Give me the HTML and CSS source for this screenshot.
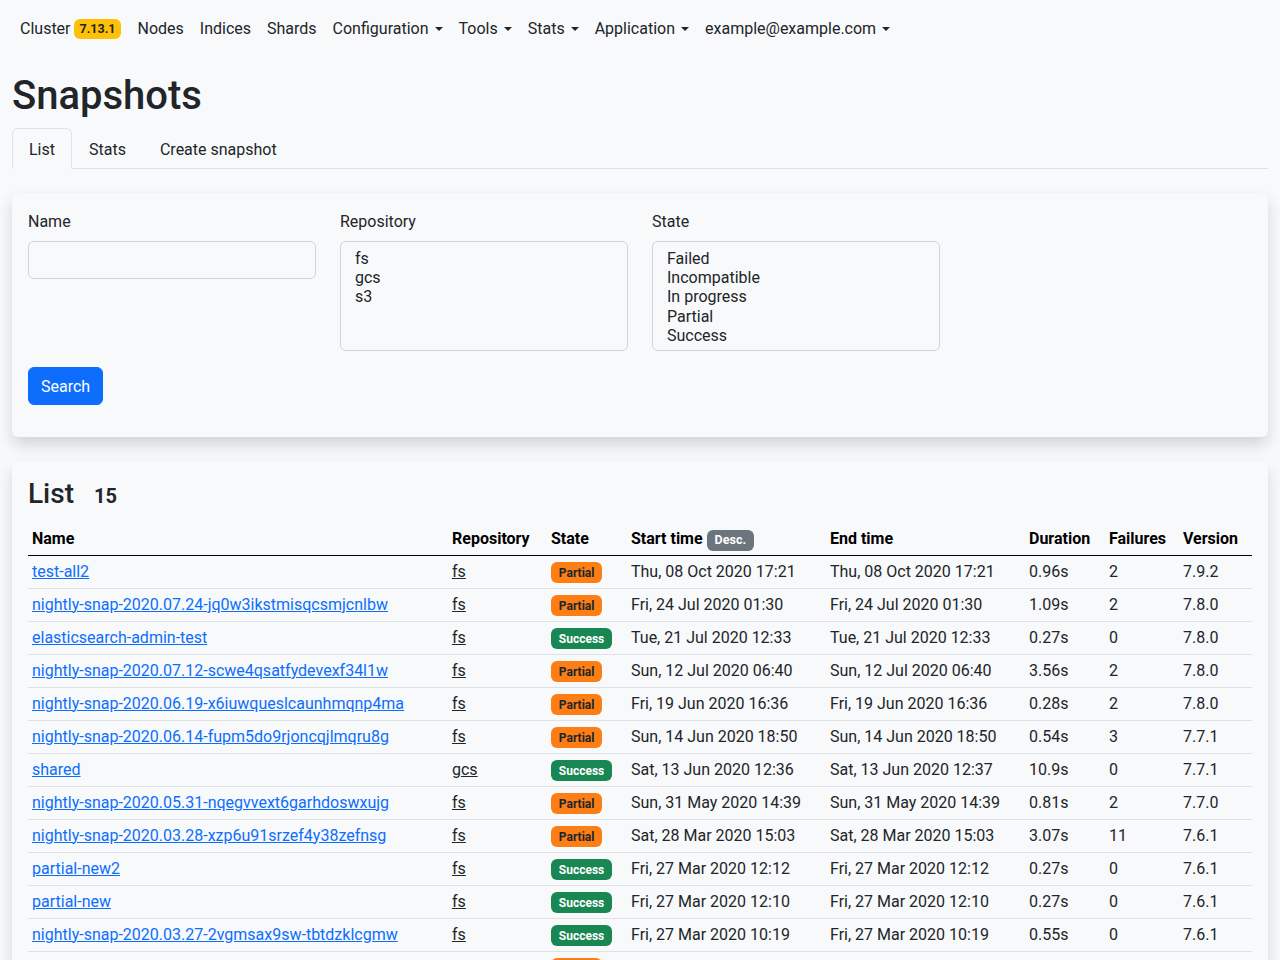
FILE: index.html
```html
<!DOCTYPE html>
<html lang="en">
<head>
<meta charset="utf-8">
<title>Snapshots</title>
<link rel="stylesheet" href="styles.css">
</head>
<body>
<nav class="navbar">
  <a class="nav-link" href="#">Cluster <span class="badge badge-warning">7.13.1</span></a>
  <a class="nav-link" href="#">Nodes</a>
  <a class="nav-link" href="#">Indices</a>
  <a class="nav-link" href="#">Shards</a>
  <a class="nav-link dropdown" href="#">Configuration</a>
  <a class="nav-link dropdown" href="#">Tools</a>
  <a class="nav-link dropdown" href="#">Stats</a>
  <a class="nav-link dropdown" href="#">Application</a>
  <a class="nav-link dropdown" href="#">example@example.com</a>
</nav>
<main class="container">
  <h1 class="title">Snapshots</h1>
  <ul class="tabs">
    <li><a class="tab active" href="#">List</a></li>
    <li><a class="tab" href="#">Stats</a></li>
    <li><a class="tab" href="#">Create snapshot</a></li>
  </ul>

  <section class="card">
    <form class="search-form">
      <div class="row">
        <div class="field">
          <label class="form-label" for="name">Name</label>
          <input class="form-control" id="name" type="text">
        </div>
        <div class="field">
          <label class="form-label" for="repo">Repository</label>
          <select class="form-select" id="repo" multiple>
            <option>fs</option>
            <option>gcs</option>
            <option>s3</option>
          </select>
        </div>
        <div class="field">
          <label class="form-label" for="state">State</label>
          <select class="form-select" id="state" multiple>
            <option>Failed</option>
            <option>Incompatible</option>
            <option>In progress</option>
            <option>Partial</option>
            <option>Success</option>
          </select>
        </div>
      </div>
      <button class="btn" type="button">Search</button>
    </form>
  </section>

  <section class="card">
    <h3 class="list-title">List <span class="count">15</span></h3>
    <table class="table">
      <colgroup>
        <col class="c-name"><col class="c-repo"><col class="c-state"><col class="c-time"><col class="c-time"><col class="c-dur"><col class="c-fail"><col class="c-ver">
      </colgroup>
      <thead>
        <tr>
          <th>Name</th><th>Repository</th><th>State</th>
          <th>Start time <span class="badge badge-secondary">Desc.</span></th>
          <th>End time</th><th>Duration</th><th>Failures</th><th>Version</th>
        </tr>
      </thead>
      <tbody>
        <tr><td><a href="#">test-all2</a></td><td><a class="repo" href="#">fs</a></td><td><span class="badge badge-partial">Partial</span></td><td>Thu, 08 Oct 2020 17:21</td><td>Thu, 08 Oct 2020 17:21</td><td>0.96s</td><td>2</td><td>7.9.2</td></tr>
        <tr><td><a href="#">nightly-snap-2020.07.24-jq0w3ikstmisqcsmjcnlbw</a></td><td><a class="repo" href="#">fs</a></td><td><span class="badge badge-partial">Partial</span></td><td>Fri, 24 Jul 2020 01:30</td><td>Fri, 24 Jul 2020 01:30</td><td>1.09s</td><td>2</td><td>7.8.0</td></tr>
        <tr><td><a href="#">elasticsearch-admin-test</a></td><td><a class="repo" href="#">fs</a></td><td><span class="badge badge-success">Success</span></td><td>Tue, 21 Jul 2020 12:33</td><td>Tue, 21 Jul 2020 12:33</td><td>0.27s</td><td>0</td><td>7.8.0</td></tr>
        <tr><td><a href="#">nightly-snap-2020.07.12-scwe4qsatfydevexf34l1w</a></td><td><a class="repo" href="#">fs</a></td><td><span class="badge badge-partial">Partial</span></td><td>Sun, 12 Jul 2020 06:40</td><td>Sun, 12 Jul 2020 06:40</td><td>3.56s</td><td>2</td><td>7.8.0</td></tr>
        <tr><td><a href="#">nightly-snap-2020.06.19-x6iuwqueslcaunhmqnp4ma</a></td><td><a class="repo" href="#">fs</a></td><td><span class="badge badge-partial">Partial</span></td><td>Fri, 19 Jun 2020 16:36</td><td>Fri, 19 Jun 2020 16:36</td><td>0.28s</td><td>2</td><td>7.8.0</td></tr>
        <tr><td><a href="#">nightly-snap-2020.06.14-fupm5do9rjoncqjlmqru8g</a></td><td><a class="repo" href="#">fs</a></td><td><span class="badge badge-partial">Partial</span></td><td>Sun, 14 Jun 2020 18:50</td><td>Sun, 14 Jun 2020 18:50</td><td>0.54s</td><td>3</td><td>7.7.1</td></tr>
        <tr><td><a href="#">shared</a></td><td><a class="repo" href="#">gcs</a></td><td><span class="badge badge-success">Success</span></td><td>Sat, 13 Jun 2020 12:36</td><td>Sat, 13 Jun 2020 12:37</td><td>10.9s</td><td>0</td><td>7.7.1</td></tr>
        <tr><td><a href="#">nightly-snap-2020.05.31-nqegvvext6garhdoswxujg</a></td><td><a class="repo" href="#">fs</a></td><td><span class="badge badge-partial">Partial</span></td><td>Sun, 31 May 2020 14:39</td><td>Sun, 31 May 2020 14:39</td><td>0.81s</td><td>2</td><td>7.7.0</td></tr>
        <tr><td><a href="#">nightly-snap-2020.03.28-xzp6u91srzef4y38zefnsg</a></td><td><a class="repo" href="#">fs</a></td><td><span class="badge badge-partial">Partial</span></td><td>Sat, 28 Mar 2020 15:03</td><td>Sat, 28 Mar 2020 15:03</td><td>3.07s</td><td>11</td><td>7.6.1</td></tr>
        <tr><td><a href="#">partial-new2</a></td><td><a class="repo" href="#">fs</a></td><td><span class="badge badge-success">Success</span></td><td>Fri, 27 Mar 2020 12:12</td><td>Fri, 27 Mar 2020 12:12</td><td>0.27s</td><td>0</td><td>7.6.1</td></tr>
        <tr><td><a href="#">partial-new</a></td><td><a class="repo" href="#">fs</a></td><td><span class="badge badge-success">Success</span></td><td>Fri, 27 Mar 2020 12:10</td><td>Fri, 27 Mar 2020 12:10</td><td>0.27s</td><td>0</td><td>7.6.1</td></tr>
        <tr><td><a href="#">nightly-snap-2020.03.27-2vgmsax9sw-tbtdzklcgmw</a></td><td><a class="repo" href="#">fs</a></td><td><span class="badge badge-success">Success</span></td><td>Fri, 27 Mar 2020 10:19</td><td>Fri, 27 Mar 2020 10:19</td><td>0.55s</td><td>0</td><td>7.6.1</td></tr>
        <tr><td><a href="#">partial</a></td><td><a class="repo" href="#">fs</a></td><td><span class="badge badge-partial">Partial</span></td><td>Fri, 27 Mar 2020 10:05</td><td>Fri, 27 Mar 2020 10:05</td><td>0.31s</td><td>2</td><td>7.6.1</td></tr>
        <tr><td><a href="#">nightly-snap-2020.03.26-a8kq2lzr0wbxu7thcyfmpe</a></td><td><a class="repo" href="#">fs</a></td><td><span class="badge badge-success">Success</span></td><td>Thu, 26 Mar 2020 01:30</td><td>Thu, 26 Mar 2020 01:30</td><td>0.62s</td><td>0</td><td>7.6.1</td></tr>
        <tr><td><a href="#">test</a></td><td><a class="repo" href="#">fs</a></td><td><span class="badge badge-success">Success</span></td><td>Wed, 25 Mar 2020 16:12</td><td>Wed, 25 Mar 2020 16:12</td><td>0.24s</td><td>0</td><td>7.6.1</td></tr>
      </tbody>
    </table>
  </section>
</main>
</body>
</html>
```
FILE: styles.css
```css
* { box-sizing: border-box; }

html, body {
  margin: 0;
  background: #f8f9fa;
  color: #212529;
  font-family: Roboto, "Noto Sans", sans-serif;
  font-size: 16px;
  line-height: 1.5;
}

a { color: #0d6efd; }

.navbar {
  display: flex;
  align-items: center;
  padding: 8px 12px;
}

.nav-link {
  display: inline-flex;
  align-items: center;
  height: 40px;
  padding: 9px 8px 7px;
  color: #212529;
  text-decoration: none;
}

.dropdown::after {
  content: "";
  display: inline-block;
  margin-left: 6px;
  border-top: 0.3em solid currentColor;
  border-left: 0.3em solid transparent;
  border-right: 0.3em solid transparent;
}

.badge {
  display: inline-block;
  padding: 0.35em 0.65em;
  font-size: 0.75em;
  font-weight: 700;
  line-height: 1;
  border-radius: 0.375rem;
  vertical-align: baseline;
  white-space: nowrap;
}

.navbar .badge {
  margin-left: 3px;
  padding: 4px 6px;
  font-size: 12.5px;
}

.badge-warning { background: #ffc107; color: #212529; }
.badge-secondary { background: #6c757d; color: #fff; }
.badge-partial { background: #fd7e14; color: #212529; }
.badge-success { background: #198754; color: #fff; }

.container {
  padding: 0 12px 24px;
}

.title {
  margin: 16px 0 8px;
  font-size: 40px;
  font-weight: 500;
  line-height: 48px;
}

.tabs {
  display: flex;
  list-style: none;
  margin: 0;
  padding: 0;
  border-bottom: 1px solid #dee2e6;
}

.tab {
  display: block;
  height: 41px;
  margin-bottom: -1px;
  padding: 9px 16px 7px;
  line-height: 24px;
  color: #212529;
  text-decoration: none;
  border: 1px solid transparent;
  border-top-left-radius: 6px;
  border-top-right-radius: 6px;
}

.tab.active {
  border-color: #dee2e6 #dee2e6 #f8f9fa;
  background: #f8f9fa;
}

.card {
  margin-top: 24px;
  padding: 16px;
  background: #f8f9fa;
  border-radius: 6px;
  box-shadow: 0 0.5rem 1rem rgba(0, 0, 0, 0.15);
}

.search-form { margin-bottom: 16px; }

.row {
  display: grid;
  grid-template-columns: repeat(3, 288px);
  column-gap: 24px;
  align-items: start;
  margin-bottom: 16px;
}

.form-label {
  display: block;
  height: 25px;
  padding-top: 1px;
  margin-bottom: 7px;
  line-height: 24px;
}

.form-control,
.form-select {
  display: block;
  width: 100%;
  padding: 6px 12px;
  font: inherit;
  color: #212529;
  background: #f8f9fa;
  border: 1px solid #ced4da;
  border-radius: 6px;
  outline: none;
}

.form-control { height: 38px; }

.form-select {
  height: 110px;
  padding-top: 7px;
  padding-bottom: 5px;
  overflow: hidden;
}

.form-select option {
  padding: 0 2px;
  line-height: 19.5px;
  font-size: 16px;
}

.btn {
  display: inline-block;
  height: 38px;
  padding: 7px 12px 5px;
  font: inherit;
  line-height: 24px;
  color: #fff;
  background: #0d6efd;
  border: 1px solid #0d6efd;
  border-radius: 6px;
}

.list-title {
  height: 34px;
  margin: 0 0 10px;
  font-size: 28px;
  font-weight: 500;
  line-height: 34px;
}

.count {
  margin-left: 13px;
  font-size: 20px;
  font-weight: 700;
}

.table {
  width: 100%;
  border-collapse: collapse;
  table-layout: fixed;
}

.c-name { width: 420px; }
.c-repo { width: 99px; }
.c-state { width: 80px; }
.c-time { width: 199px; }
.c-dur { width: 80px; }
.c-fail { width: 74px; }
.c-ver { width: auto; }

.table th,
.table td {
  height: 33px;
  padding: 4px;
  line-height: 24px;
  text-align: left;
  white-space: nowrap;
  overflow: hidden;
  vertical-align: top;
  border-bottom: 1px solid #dee2e6;
}

.table th {
  height: 34px;
  padding: 6px 4px 3px;
  color: #000;
  font-weight: 700;
  border-bottom: 1px solid #000;
}

.table th .badge {
  padding: 4px 8px;
  font-size: 12.5px;
  vertical-align: 0;
}

.repo { color: #212529; }
```
